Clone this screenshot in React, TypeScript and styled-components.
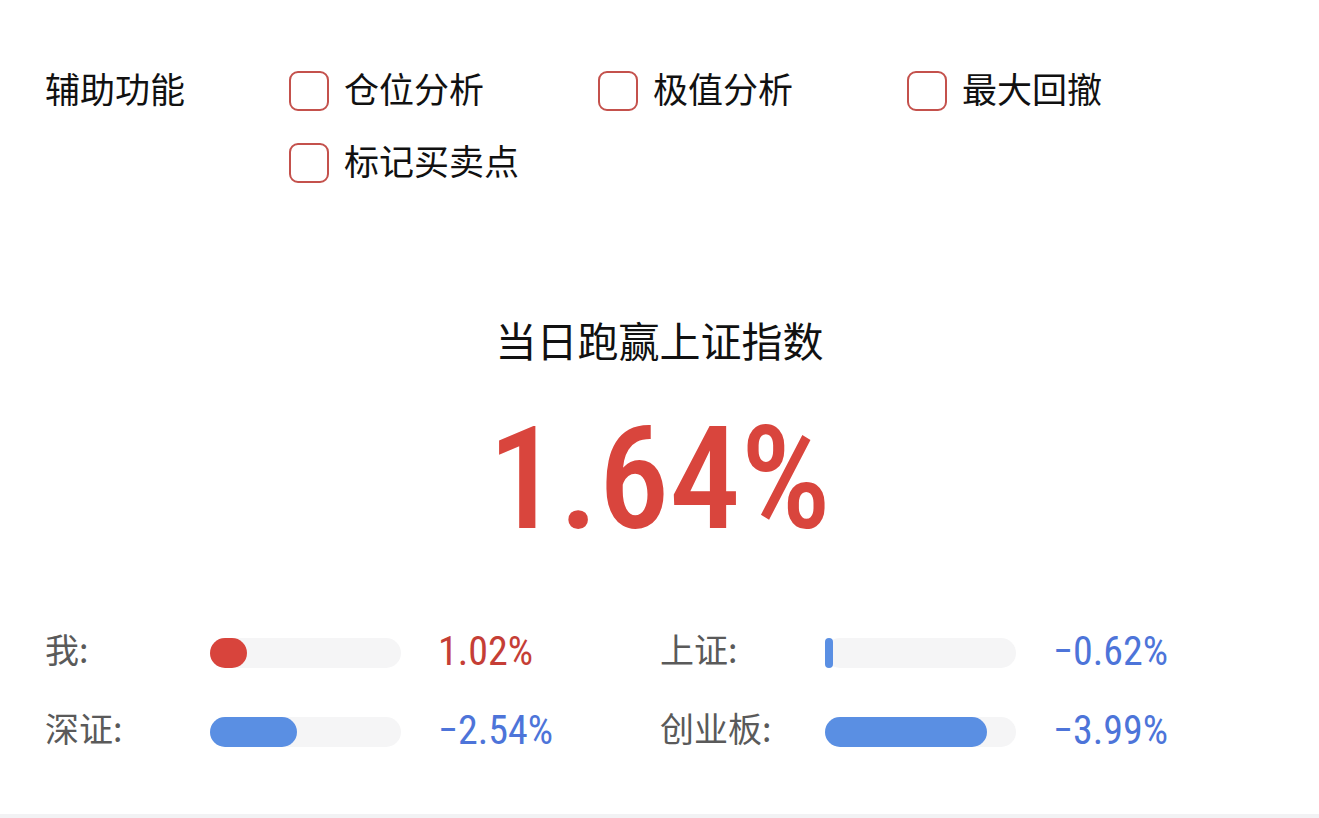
import React from "react";
import styled, { createGlobalStyle } from "styled-components";

const GlobalStyle = createGlobalStyle`
  html, body {
    margin: 0;
    padding: 0;
    background: #ffffff;
  }
  body {
    font-family: "Noto Sans CJK SC", "Noto Sans", sans-serif;
    -webkit-font-smoothing: antialiased;
  }
  * { box-sizing: border-box; }
`;

const NUM_FONT = `"Liberation Sans Narrow", "Roboto Condensed", "Liberation Sans", sans-serif`;

const Page = styled.div`
  width: 1319px;
  height: 818px;
  display: flex;
  flex-direction: column;
  background: #ffffff;
  overflow: hidden;
`;

const AuxSection = styled.section`
  display: grid;
  grid-template-columns: 244px 1fr;
  padding: 71px 0 0 45px;
`;

const CjkText = styled.span`
  line-height: 1;
  padding-bottom: 8px;
`;

const AuxLabel = styled.div`
  height: 40px;
  display: flex;
  align-items: center;
  font-size: 35px;
  color: #111111;
`;

const OptionGrid = styled.div`
  display: grid;
  grid-template-columns: repeat(3, 309px);
  row-gap: 32px;
`;

const Option = styled.label`
  display: flex;
  align-items: center;
  gap: 15px;
  height: 40px;
  font-size: 35px;
  color: #111111;
  cursor: pointer;
`;

const Box = styled.span`
  width: 40px;
  height: 40px;
  border: 2px solid #c4514c;
  border-radius: 9px;
  background: #ffffff;
  flex: none;
`;

const Headline = styled.div`
  margin-top: 131px;
  text-align: center;
  font-size: 41px;
  line-height: 50px;
  color: #111111;
`;

const BigValue = styled.div`
  margin-top: 45px;
  text-align: center;
  font-family: ${NUM_FONT};
  font-weight: 500;
  font-size: 142px;
  line-height: 142px;
  color: #d9453d;
`;

const StatsGrid = styled.div`
  display: grid;
  grid-template-columns: 615px 615px;
  row-gap: 39px;
  padding-left: 45px;
  margin-top: 82px;
`;

const StatRow = styled.div`
  display: flex;
  align-items: center;
  height: 40px;
`;

const StatLabel = styled.span`
  width: 165px;
  display: flex;
  align-items: center;
  font-size: 34px;
  color: #5a5a5a;
`;

const Track = styled.div`
  width: 191px;
  height: 30px;
  border-radius: 15px;
  background: #f5f5f6;
  flex: none;
`;

const Fill = styled.div<{ $tone: "up" | "down" }>`
  height: 100%;
  border-radius: 15px;
  background: ${(p) => (p.$tone === "up" ? "#d8443c" : "#5a8fe3")};
`;

const StatValue = styled.span<{ $tone: "up" | "down" }>`
  margin-left: 37px;
  font-family: ${NUM_FONT};
  font-weight: 400;
  font-size: 40px;
  line-height: 1;
  padding-bottom: 2px;
  color: ${(p) => (p.$tone === "up" ? "#c53e36" : "#4d74d9")};
`;

const Spacer = styled.div`
  flex: 1;
`;

const BottomRule = styled.div`
  height: 4px;
  background: #f2f2f4;
  flex: none;
`;

const options = ["仓位分析", "极值分析", "最大回撤", "标记买卖点"];

const stats: { label: string; width: number; value: string; tone: "up" | "down" }[] = [
  { label: "我:", width: 37, value: "1.02%", tone: "up" },
  { label: "上证:", width: 8, value: "−0.62%", tone: "down" },
  { label: "深证:", width: 87, value: "−2.54%", tone: "down" },
  { label: "创业板:", width: 162, value: "−3.99%", tone: "down" },
];

export default function App() {
  return (
    <>
      <GlobalStyle />
      <Page>
        <AuxSection>
          <AuxLabel>
            <CjkText>辅助功能</CjkText>
          </AuxLabel>
          <OptionGrid>
            {options.map((o) => (
              <Option key={o}>
                <Box />
                <CjkText>{o}</CjkText>
              </Option>
            ))}
          </OptionGrid>
        </AuxSection>
        <Headline>当日跑赢上证指数</Headline>
        <BigValue>1.64%</BigValue>
        <StatsGrid>
          {stats.map((s) => (
            <StatRow key={s.label}>
              <StatLabel>
                <CjkText>{s.label}</CjkText>
              </StatLabel>
              <Track>
                <Fill $tone={s.tone} style={{ width: `${s.width}px` }} />
              </Track>
              <StatValue $tone={s.tone}>{s.value}</StatValue>
            </StatRow>
          ))}
        </StatsGrid>
        <Spacer />
        <BottomRule />
      </Page>
    </>
  );
}
